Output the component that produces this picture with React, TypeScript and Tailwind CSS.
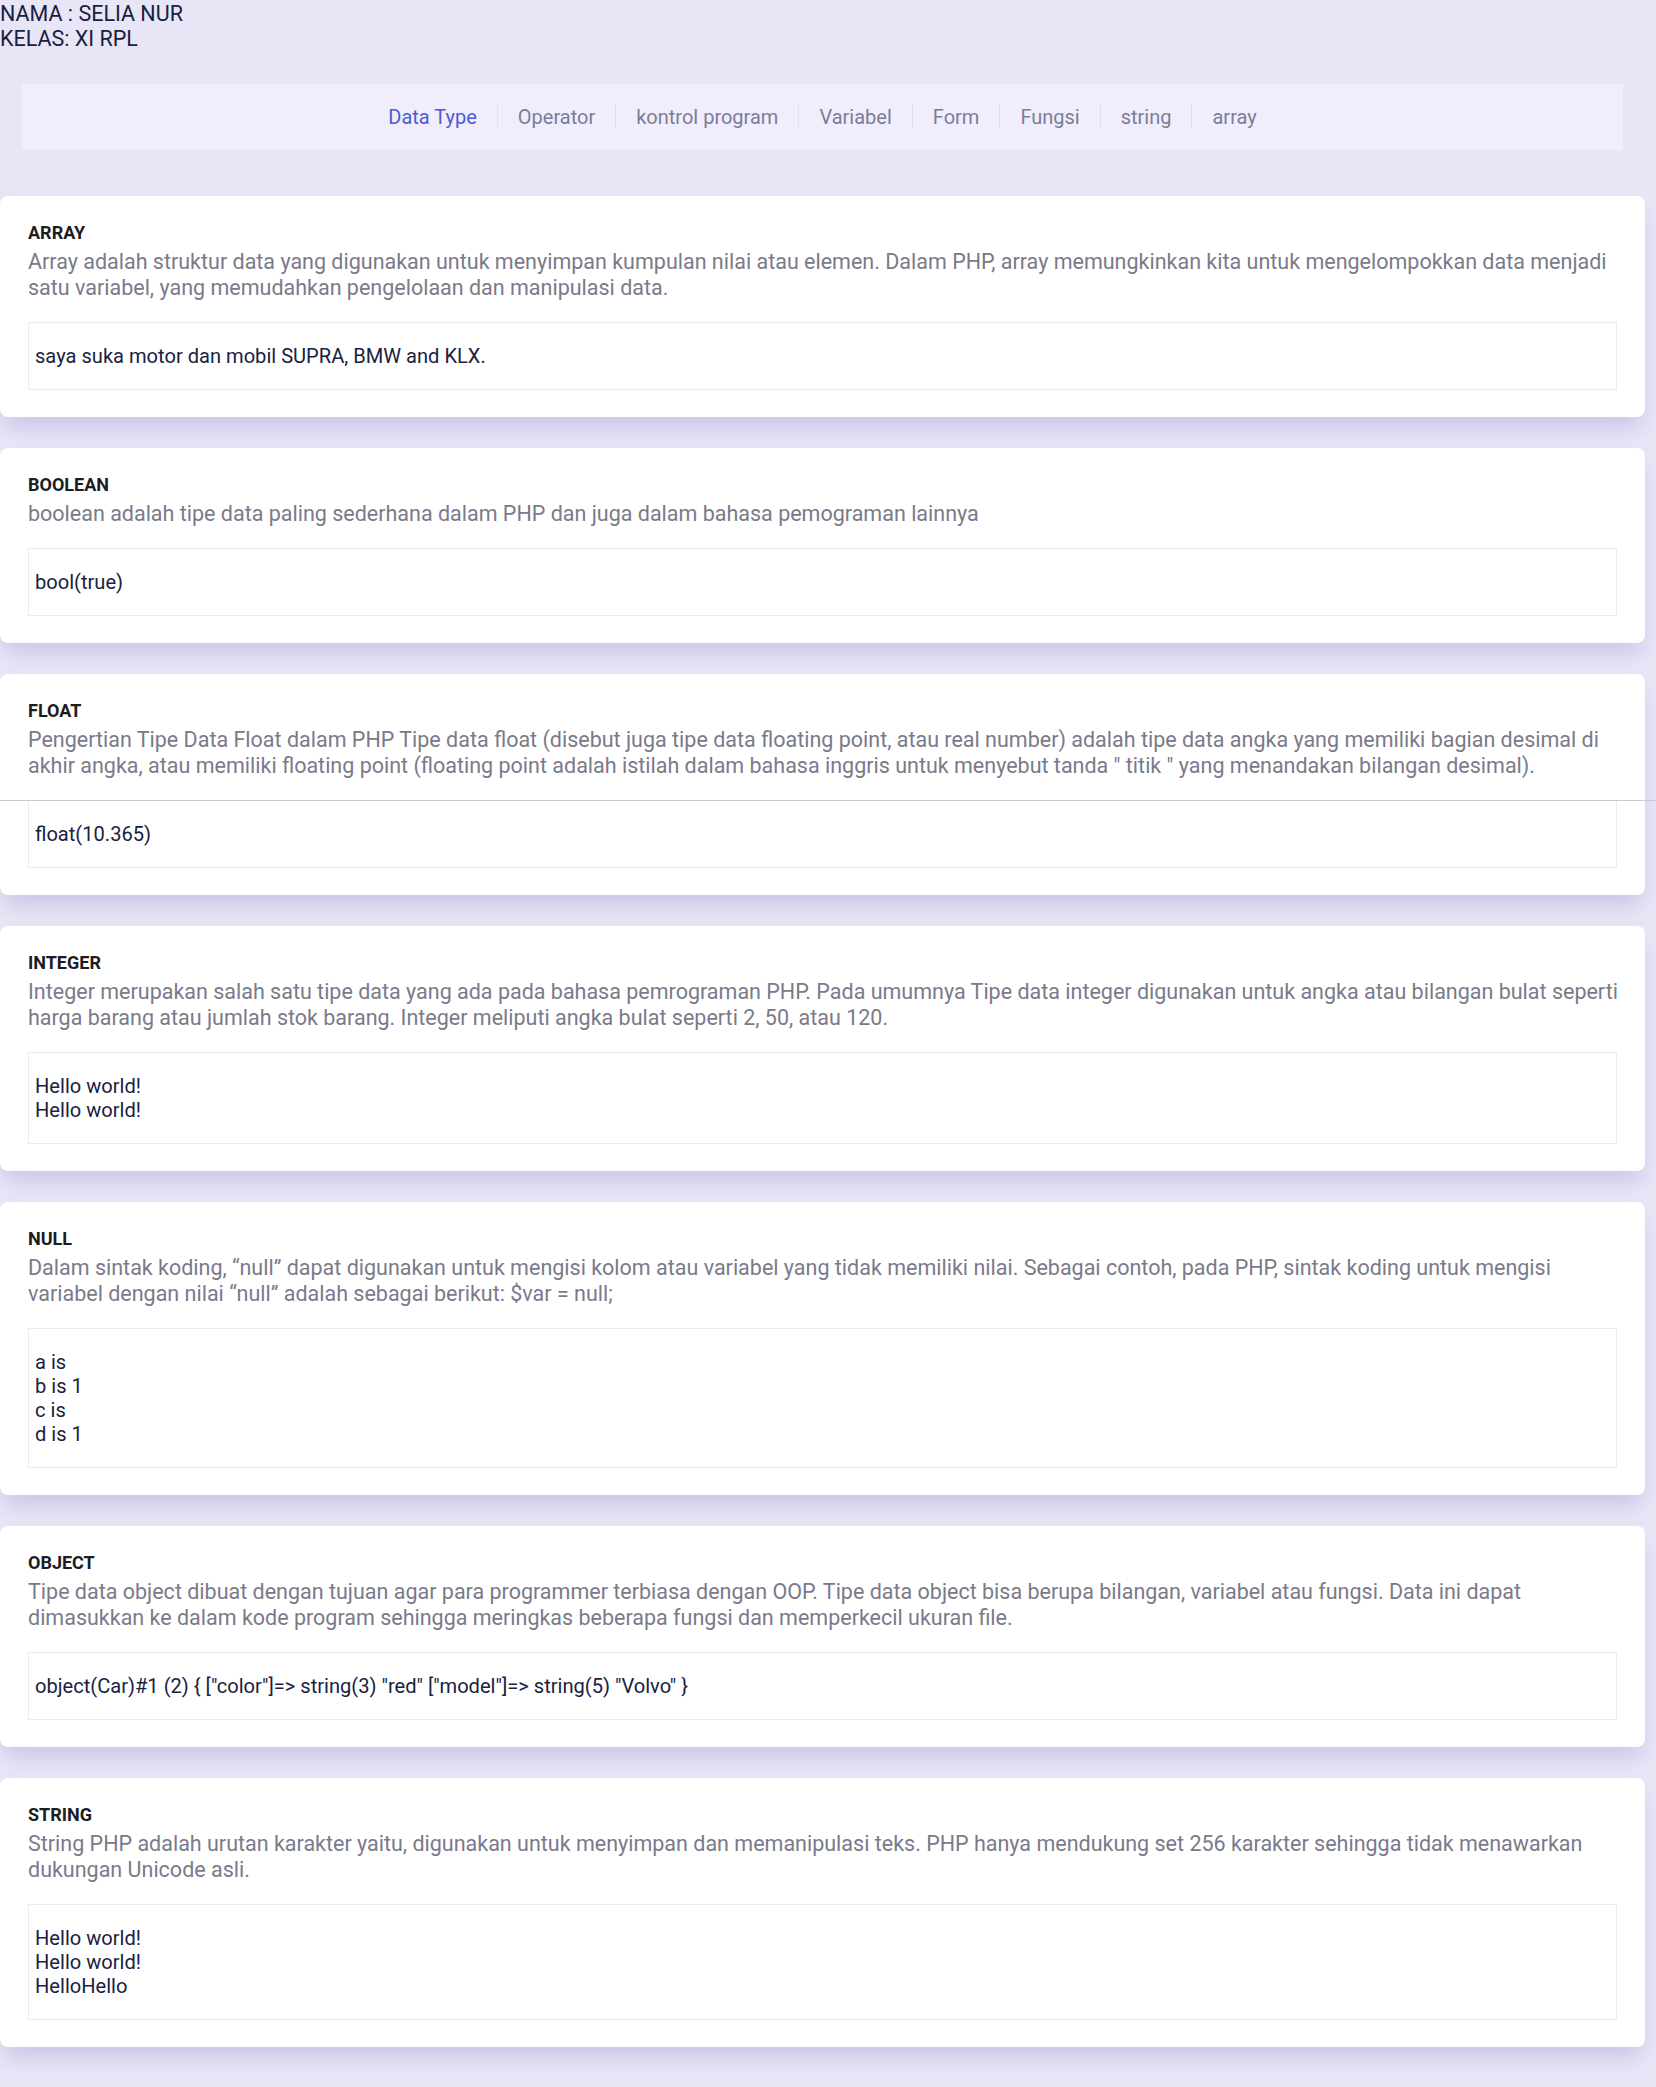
const navItems = ["Data Type", "Operator", "kontrol program", "Variabel", "Form", "Fungsi", "string", "array"];

interface Section {
  title: string;
  desc: string;
  output: string[];
  line?: boolean;
}

const sections: Section[] = [
  {
    title: "ARRAY",
    desc: "Array adalah struktur data yang digunakan untuk menyimpan kumpulan nilai atau elemen. Dalam PHP, array memungkinkan kita untuk mengelompokkan data menjadi satu variabel, yang memudahkan pengelolaan dan manipulasi data.",
    output: ["saya suka motor dan mobil SUPRA, BMW and KLX."],
  },
  {
    title: "BOOLEAN",
    desc: "boolean adalah tipe data paling sederhana dalam PHP dan juga dalam bahasa pemograman lainnya",
    output: ["bool(true)"],
  },
  {
    title: "FLOAT",
    desc: "Pengertian Tipe Data Float dalam PHP Tipe data float (disebut juga tipe data floating point, atau real number) adalah tipe data angka yang memiliki bagian desimal di akhir angka, atau memiliki floating point (floating point adalah istilah dalam bahasa inggris untuk menyebut tanda \" titik \" yang menandakan bilangan desimal).",
    output: ["float(10.365)"],
    line: true,
  },
  {
    title: "INTEGER",
    desc: "Integer merupakan salah satu tipe data yang ada pada bahasa pemrograman PHP. Pada umumnya Tipe data integer digunakan untuk angka atau bilangan bulat seperti harga barang atau jumlah stok barang. Integer meliputi angka bulat seperti 2, 50, atau 120.",
    output: ["Hello world!", "Hello world!"],
  },
  {
    title: "NULL",
    desc: "Dalam sintak koding, “null” dapat digunakan untuk mengisi kolom atau variabel yang tidak memiliki nilai. Sebagai contoh, pada PHP, sintak koding untuk mengisi variabel dengan nilai “null” adalah sebagai berikut: $var = null;",
    output: ["a is", "b is 1", "c is", "d is 1"],
  },
  {
    title: "OBJECT",
    desc: "Tipe data object dibuat dengan tujuan agar para programmer terbiasa dengan OOP. Tipe data object bisa berupa bilangan, variabel atau fungsi. Data ini dapat dimasukkan ke dalam kode program sehingga meringkas beberapa fungsi dan memperkecil ukuran file.",
    output: ['object(Car)#1 (2) { ["color"]=> string(3) "red" ["model"]=> string(5) "Volvo" }'],
  },
  {
    title: "STRING",
    desc: "String PHP adalah urutan karakter yaitu, digunakan untuk menyimpan dan memanipulasi teks. PHP hanya mendukung set 256 karakter sehingga tidak menawarkan dukungan Unicode asli.",
    output: ["Hello world!", "Hello world!", "HelloHello"],
  },
];

export default function App() {
  return (
    <div className="min-h-[2087px] bg-[#e8e6f6] pb-[39px] font-['Roboto','Liberation_Sans',sans-serif]">
      {/* identitas */}
      <div className="text-[21.5px] leading-[25px] text-[#17213f] pt-[1px]">
        <div>NAMA : SELIA NUR</div>
        <div>KELAS: XI RPL</div>
      </div>

      {/* navigasi */}
      <nav className="ml-[22px] w-[1601px] mt-[33px] h-[66px] bg-[#f0eefd] flex items-center justify-center">
        {navItems.map((item, i) => (
          <div key={item} className="flex items-center">
            {i > 0 && <span className="h-[25px] border-l border-dotted border-[#d4d2e0] mx-[20px]" />}
            <span className={i === 0 ? "text-[20px] text-[#4c5bd4]" : "text-[20px] text-[#7b7d98]"}>{item}</span>
          </div>
        ))}
      </nav>

      <div className="mt-[46px] flex flex-col gap-[31px] w-[1645px]">
        {sections.map((s) => (
          <section
            key={s.title}
            className="bg-white rounded-lg px-[28px] pt-[26px] pb-[27px] shadow-[0_14px_22px_-4px_rgba(120,110,195,0.28)]"
          >
            <h2 className="text-[18px] leading-[22px] font-bold text-[#1c1c22]">{s.title}</h2>
            <p className="mt-[5px] -mr-[8px] text-[21.5px] leading-[26px] text-[#7a7a8a]">{s.desc}</p>
            <div className="relative mt-[21px] border border-[#ebebf0] px-[6px] py-[21px] text-[20.1px] leading-[24px] text-[#18223f]">
              {s.line && <div className="absolute top-[-1px] left-[-29px] w-[1656px] h-px bg-[#c9c9cf]" />}
              {s.output.map((o, i) => (
                <div key={i}>{o}</div>
              ))}
            </div>
          </section>
        ))}
      </div>
    </div>
  );
}
